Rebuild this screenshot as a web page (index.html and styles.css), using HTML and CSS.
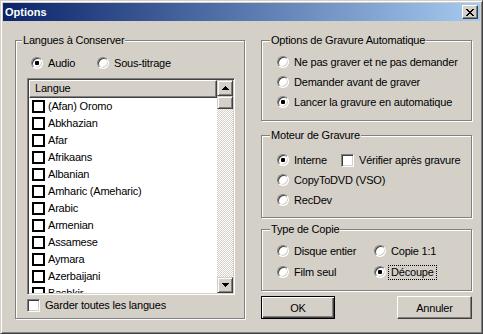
FILE: index.html
```html
<!DOCTYPE html>
<html lang="fr">
<head>
    <meta charset="UTF-8">
    <title>Options</title>
    <link rel="stylesheet" href="styles.css">
</head>
<body>
    <div class="window">
        <div class="titlebar">
            <span class="title">Options</span>
            <div class="close-btn">
                <svg width="8" height="7" viewBox="0 0 8 7" shape-rendering="crispEdges"><path d="M0 0h2v1h-2z M6 0h2v1h-2z M1 1h2v1h-2z M5 1h2v1h-2z M2 2h4v1h-4z M3 3h2v1h-2z M2 4h4v1h-4z M1 5h2v1h-2z M5 5h2v1h-2z M0 6h2v1h-2z M6 6h2v1h-2z" fill="#000"/></svg>
            </div>
        </div>

        <div class="dialog">
            <fieldset class="group group-langs">
                <legend>Langues à Conserver</legend>
                <div class="group-body">
                    <div class="langs-radios">
                        <div class="radio checked"><span class="dot"></span>Audio</div>
                        <div class="radio"><span class="dot"></span>Sous-titrage</div>
                    </div>

                    <div class="listview">
                        <div class="list-main">
                            <div class="list-header">Langue</div>
                            <ul class="list-rows">
                                <li><span class="flatbox"></span>(Afan) Oromo</li>
                                <li><span class="flatbox"></span>Abkhazian</li>
                                <li><span class="flatbox"></span>Afar</li>
                                <li><span class="flatbox"></span>Afrikaans</li>
                                <li><span class="flatbox"></span>Albanian</li>
                                <li><span class="flatbox"></span>Amharic (Ameharic)</li>
                                <li><span class="flatbox"></span>Arabic</li>
                                <li><span class="flatbox"></span>Armenian</li>
                                <li><span class="flatbox"></span>Assamese</li>
                                <li><span class="flatbox"></span>Aymara</li>
                                <li><span class="flatbox"></span>Azerbaijani</li>
                                <li><span class="flatbox"></span>Bashkir</li>
                            </ul>
                        </div>
                        <div class="scrollbar">
                            <div class="sb-btn">
                                <svg width="7" height="4" viewBox="0 0 7 4" shape-rendering="crispEdges"><path d="M3 0h1v1h1v1h1v1h1v1H0V3h1V2h1V1h1z" fill="#000"/></svg>
                            </div>
                            <div class="sb-thumb"></div>
                            <div class="sb-track"></div>
                            <div class="sb-btn">
                                <svg width="7" height="4" viewBox="0 0 7 4" shape-rendering="crispEdges"><path d="M0 0h7v1H6v1H5v1H4v1H3V3H2V2H1V1H0z" fill="#000"/></svg>
                            </div>
                        </div>
                    </div>

                    <div class="check keep-all"><span class="box"></span>Garder toutes les langues</div>
                </div>
            </fieldset>

            <div class="right-col">
                <fieldset class="group group-auto">
                    <legend>Options de Gravure Automatique</legend>
                    <div class="group-body stack">
                        <div class="radio"><span class="dot"></span>Ne pas graver et ne pas demander</div>
                        <div class="radio"><span class="dot"></span>Demander avant de graver</div>
                        <div class="radio checked"><span class="dot"></span>Lancer la gravure en automatique</div>
                    </div>
                </fieldset>

                <fieldset class="group group-engine">
                    <legend>Moteur de Gravure</legend>
                    <div class="group-body stack">
                        <div class="engine-row">
                            <div class="radio checked engine-first"><span class="dot"></span>Interne</div>
                            <div class="check"><span class="box"></span>Vérifier après gravure</div>
                        </div>
                        <div class="radio"><span class="dot"></span>CopyToDVD (VSO)</div>
                        <div class="radio"><span class="dot"></span>RecDev</div>
                    </div>
                </fieldset>

                <fieldset class="group group-copy">
                    <legend>Type de Copie</legend>
                    <div class="group-body copy-grid">
                        <div class="radio"><span class="dot"></span>Disque entier</div>
                        <div class="radio"><span class="dot"></span>Copie 1:1</div>
                        <div class="radio"><span class="dot"></span>Film seul</div>
                        <div class="radio checked"><span class="dot"></span><span class="focus">Découpe</span></div>
                    </div>
                </fieldset>

                <div class="buttons">
                    <button class="btn btn-default">OK</button>
                    <button class="btn btn-cancel">Annuler</button>
                </div>
            </div>
        </div>
    </div>
</body>
</html>
```

FILE: styles.css
```css
:root {
    --face: #D4D0C8;
    --light: #FFFFFF;
    --shadow: #808080;
    --dark: #404040;
}

* {
    box-sizing: border-box;
}

body {
    margin: 0;
    background: var(--face);
    font-family: "Liberation Sans", Arial, sans-serif;
    font-size: 11px;
    line-height: 13px;
    letter-spacing: -0.2px;
    color: #000;
}

.window {
    width: 483px;
    height: 334px;
    padding: 2px;
    border: 1px solid;
    border-color: var(--face) var(--dark) var(--dark) var(--face);
    box-shadow: inset 1px 1px var(--light), inset -1px -1px var(--shadow);
    background: var(--face);
}

/* title bar */

.titlebar {
    height: 18px;
    display: flex;
    align-items: center;
    justify-content: space-between;
    padding: 0 2px;
    background: linear-gradient(to right, #0A246A, #A6CAF0);
}

.title {
    color: #fff;
    font-weight: bold;
    letter-spacing: 0;
}

.close-btn {
    width: 16px;
    height: 14px;
    display: flex;
    align-items: center;
    justify-content: center;
    border: 1px solid;
    border-color: var(--light) var(--dark) var(--dark) var(--light);
    box-shadow: inset -1px -1px var(--shadow);
    background: var(--face);
}

.close-btn svg {
    display: block;
}

/* dialog layout */

.dialog {
    display: flex;
    gap: 16px;
    padding: 13px 8px 0 12px;
}

.group {
    margin: 0;
    min-width: 0;
    border: 1px solid var(--shadow);
    box-shadow: 1px 1px 0 var(--light), inset 1px 1px 0 var(--light);
}

.group legend {
    padding: 0 1px;
    background: var(--face);
    line-height: 13px;
    white-space: nowrap;
}

.group-langs {
    width: 230px;
    padding: 8px 9px 3px 6px;
}

.group-langs .group-body {
    padding-left: 5px;
}

.right-col {
    width: 211px;
    display: flex;
    flex-direction: column;
}

.right-col .group {
    width: 211px;
    padding-left: 8px;
    padding-right: 8px;
}

.right-col .group-body {
    padding-left: 7px;
}

.group-auto {
    padding-top: 7px;
    padding-bottom: 10px;
}

.group-engine {
    margin-top: 8px !important;
    padding-top: 10px;
    padding-bottom: 9px;
}

.group-copy {
    margin-top: 5px !important;
    padding-top: 7px;
    padding-bottom: 10px;
}

.stack {
    display: flex;
    flex-direction: column;
    gap: 4px;
}

.engine-row {
    display: flex;
    align-items: center;
}

.engine-first {
    width: 64px;
}

.copy-grid {
    display: grid;
    grid-template-columns: 97px auto;
    row-gap: 5px;
}

/* radios and checkboxes */

.radio, .check {
    display: flex;
    align-items: center;
    height: 16px;
    white-space: nowrap;
}

.radio .dot {
    position: relative;
    flex: none;
    width: 12px;
    height: 12px;
    margin-right: 5px;
    border-radius: 50%;
    border: 1px solid;
    border-color: var(--shadow) var(--light) var(--light) var(--shadow);
    box-shadow: inset 1px 1px var(--dark), inset -1px -1px var(--face);
    background: #fff;
}

.radio.checked .dot::after {
    content: "";
    position: absolute;
    left: 3px;
    top: 3px;
    width: 4px;
    height: 4px;
    border-radius: 1px;
    background: #000;
}

.check .box {
    flex: none;
    width: 13px;
    height: 13px;
    margin-right: 5px;
    border: 1px solid;
    border-color: var(--shadow) var(--light) var(--light) var(--shadow);
    box-shadow: inset 1px 1px var(--dark), inset -1px -1px var(--face);
    background: #fff;
}

.focus {
    margin-left: -2px;
    padding: 0 2px;
    outline: 1px dotted #000;
}

/* language list */

.langs-radios {
    display: grid;
    grid-template-columns: 66px auto;
    padding-left: 4px;
}

.listview {
    display: flex;
    height: 217px;
    margin-top: 7px;
    border: 1px solid;
    border-color: var(--shadow) var(--light) var(--light) var(--shadow);
    box-shadow: inset 1px 1px var(--dark), inset -1px -1px var(--face);
    padding: 1px;
}

.list-main {
    flex: 1;
    overflow: hidden;
    background: #fff;
}

.list-header {
    height: 18px;
    padding-left: 5px;
    line-height: 15px;
    border: 1px solid;
    border-color: var(--light) var(--dark) var(--dark) var(--light);
    box-shadow: inset -1px -1px var(--shadow);
    background: var(--face);
}

.list-rows {
    margin: 0;
    padding: 0;
    list-style: none;
}

.list-rows li {
    display: flex;
    align-items: center;
    height: 17px;
    padding-left: 3px;
    white-space: nowrap;
}

.flatbox {
    flex: none;
    width: 13px;
    height: 13px;
    margin-right: 3px;
    border: 2px solid #000;
    background: #fff;
}

.scrollbar {
    width: 16px;
    display: flex;
    flex-direction: column;
}

.sb-btn, .sb-thumb {
    flex: none;
    width: 16px;
    height: 16px;
    display: flex;
    align-items: center;
    justify-content: center;
    border: 1px solid;
    border-color: var(--face) var(--dark) var(--dark) var(--face);
    box-shadow: inset 1px 1px var(--light), inset -1px -1px var(--shadow);
    background: var(--face);
}

.sb-btn svg {
    display: block;
}

.sb-thumb {
    height: 13px;
}

.sb-track {
    flex: 1;
    background-color: #fff;
    background-image: conic-gradient(var(--face) 25%, #fff 0 50%, var(--face) 0 75%, #fff 0);
    background-size: 2px 2px;
}

.keep-all {
    margin-top: 2px;
}

/* buttons */

.buttons {
    display: flex;
    justify-content: space-between;
    margin-top: 5px;
}

.btn {
    height: 23px;
    padding: 0;
    font-family: inherit;
    font-size: 11px;
    letter-spacing: -0.2px;
    color: #000;
    background: var(--face);
    border: 1px solid;
    border-color: var(--light) var(--dark) var(--dark) var(--light);
    box-shadow: inset -1px -1px var(--shadow);
}

.btn-default {
    width: 74px;
    border-color: #000;
    box-shadow: inset 1px 1px var(--light), inset -1px -1px var(--dark), inset -2px -2px var(--shadow);
}

.btn-cancel {
    width: 75px;
}
```
